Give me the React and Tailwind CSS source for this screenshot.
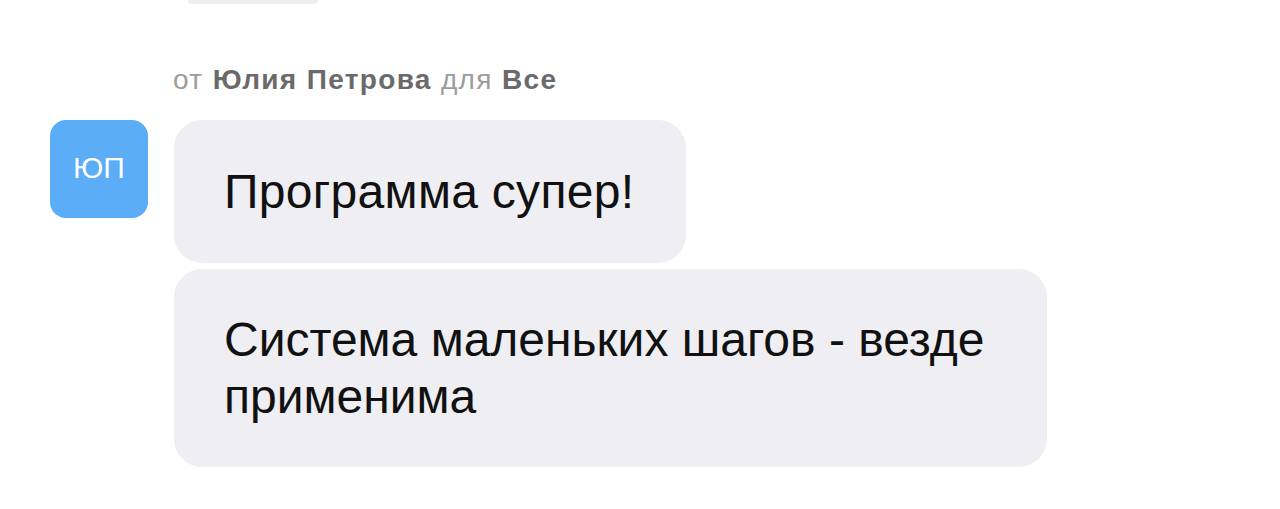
export default function App() {
  return (
    <div className="w-[1280px] h-[509px] bg-white overflow-hidden" style={{ fontFamily: '"Liberation Sans", "Inter", sans-serif' }}>
      <div className="ml-[188px] w-[130px] h-[4px] rounded-b-[20px] bg-[#eeeef2]" />
      <div className="pt-[60px] pl-[173px] text-[28px] leading-[32px] text-[#9c9c9c] tracking-[1.35px]">
        от <span className="font-bold text-[#6a6a6a]">Юлия Петрова</span> для <span className="font-bold text-[#6a6a6a]">Все</span>
      </div>
      <div className="flex pl-[50px] mt-[24px] gap-[26px]">
        <div className="w-[98px] h-[98px] rounded-[16px] bg-[#5aadf6] flex items-center justify-center text-white text-[30px] shrink-0 pb-[4px]">
          ЮП
        </div>
        <div className="flex flex-col items-start gap-[6px]">
          <div className="bg-[#eeeef3] rounded-[28px] pl-[50px] pr-[52px] py-[43px] text-[48px] leading-[57px] text-[#111] tracking-[0.3px]">
            Программа супер!
          </div>
          <div className="bg-[#eeeef3] rounded-[28px] px-[50px] py-[42px] text-[48px] leading-[57px] text-[#111] w-[873px]">
            Система маленьких шагов - везде применима
          </div>
        </div>
      </div>
    </div>
  );
}
